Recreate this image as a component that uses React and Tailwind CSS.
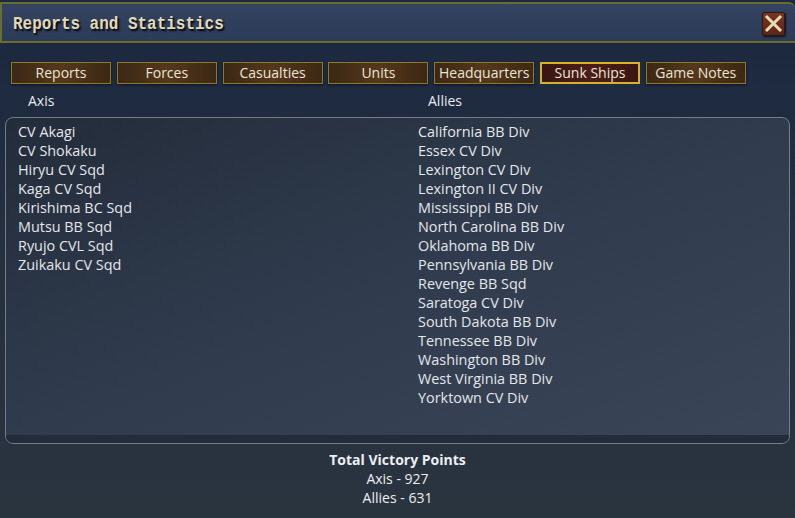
import React, { useState } from 'react';

const TABS = ['Reports', 'Forces', 'Casualties', 'Units', 'Headquarters', 'Sunk Ships', 'Game Notes'];

const AXIS_SHIPS = [
    'CV Akagi',
    'CV Shokaku',
    'Hiryu CV Sqd',
    'Kaga CV Sqd',
    'Kirishima BC Sqd',
    'Mutsu BB Sqd',
    'Ryujo CVL Sqd',
    'Zuikaku CV Sqd',
];

const ALLIED_SHIPS = [
    'California BB Div',
    'Essex CV Div',
    'Lexington CV Div',
    'Lexington II CV Div',
    'Mississippi BB Div',
    'North Carolina BB Div',
    'Oklahoma BB Div',
    'Pennsylvania BB Div',
    'Revenge BB Sqd',
    'Saratoga CV Div',
    'South Dakota BB Div',
    'Tennessee BB Div',
    'Washington BB Div',
    'West Virginia BB Div',
    'Yorktown CV Div',
];

// Wooden tab button; the active one gets a red fill and a bright gold frame
const TabButton = ({ label, active, onClick }) => (
    <button
        onClick={onClick}
        className={
            active
                ? 'w-[100px] h-[22px] flex items-center justify-center text-[14px] leading-none text-[#ece4d6] border-2 border-[#d8b224] bg-gradient-to-r from-[#3a1612] via-[#4a1e18] to-[#3a1612]'
                : 'w-[100px] h-[22px] flex items-center justify-center text-[14px] leading-none text-[#ece4d6] border border-[#8c7a2c] bg-gradient-to-r from-[#3c2814] via-[#54381c] to-[#3c2814] shadow-[0_1px_2px_rgba(0,0,0,0.6)]'
        }
    >
        {label}
    </button>
);

const ShipList = ({ ships }) => (
    <ul className="flex flex-col">
        {ships.map((name) => (
            <li key={name} className="h-[19px] leading-[19px] text-[14.4px] text-[#e4e6ea] whitespace-nowrap">
                {name}
            </li>
        ))}
    </ul>
);

export default function App() {
    const [tab, setTab] = useState('Sunk Ships');

    return (
        <div
            className="w-[795px] h-[518px] flex flex-col overflow-hidden bg-gradient-to-b from-[#1a2840] via-[#25303f] to-[#2a343f]"
            style={{ fontFamily: '"Open Sans", "Noto Sans", sans-serif' }}
        >
            {/* title bar */}
            <div className="h-[41px] mt-[2px] flex items-center justify-between pl-[11px] pr-[10px] border-t-2 border-l-2 border-b-2 border-[#6b6e2a] rounded-tr-[6px] bg-gradient-to-b from-[#334361] to-[#2c3b56]">
                <span
                    className="inline-block pt-[4px] origin-left scale-x-[0.84] text-[19px] font-bold text-[#e2d9b8] [text-shadow:2px_2px_2px_rgba(0,0,0,0.9)]"
                    style={{ fontFamily: '"Liberation Mono", "DejaVu Sans Mono", monospace' }}
                >
                    Reports and Statistics
                </span>
                <button className="w-[23px] h-[24px] mt-[2px] flex items-center justify-center rounded-[2px] border border-[#2a1a14] bg-gradient-to-b from-[#7a3424] to-[#5c2418] shadow-[1px_1px_2px_rgba(0,0,0,0.7)]">
                    <svg width="19" height="19" viewBox="0 0 19 19">
                        <path d="M3 3 L16 16 M16 3 L3 16" stroke="#e8dcae" strokeWidth="3" strokeLinecap="square" />
                    </svg>
                </button>
            </div>

            {/* tabs */}
            <div className="flex gap-[5.8px] pl-[11px] mt-[19px]">
                {TABS.map((t) => (
                    <TabButton key={t} label={t} active={t === tab} onClick={() => setTab(t)} />
                ))}
            </div>

            {/* column headings */}
            <div className="flex h-[33px] items-center text-[14px] text-[#e8eaee]">
                <span className="w-[400px] pl-[28px]">Axis</span>
                <span className="pl-[28px]">Allies</span>
            </div>

            {/* list panel */}
            <div className="mx-[5px] h-[327px] rounded-[8px] border border-[#757c88] overflow-hidden flex flex-col bg-gradient-to-br from-[#232c3a] via-[#303c4e] to-[#3a4658]">
                <div className="flex-1 flex pt-[4px]">
                    <div className="w-[400px] pl-[12px]">
                        <ShipList ships={AXIS_SHIPS} />
                    </div>
                    <div className="pl-[12px]">
                        <ShipList ships={ALLIED_SHIPS} />
                    </div>
                </div>
                <div className="h-[8px] bg-[#232c3a]" />
            </div>

            {/* totals */}
            <div className="flex flex-col items-center mt-[6px] text-[14px] leading-[19px] text-[#eceef2]">
                <span className="font-bold">Total Victory Points</span>
                <span>Axis - 927</span>
                <span>Allies - 631</span>
            </div>
        </div>
    );
}
